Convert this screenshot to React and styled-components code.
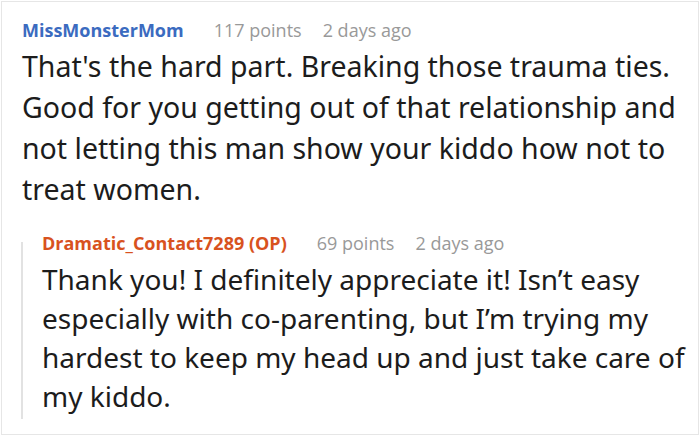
import React from "react";
import styled, { createGlobalStyle } from "styled-components";

const Global = createGlobalStyle`
  html, body { margin: 0; padding: 0; background: #fff; }
  body { font-family: "Open Sans", "Noto Sans", sans-serif; }
`;

const Frame = styled.div`
  box-sizing: border-box;
  width: 698px;
  height: 434px;
  margin: 1px 0 0 1px;
  border: 1px solid #e6e6e6;
  padding: 14px 4px 0 20px;
  overflow: hidden;
`;

const Comment = styled.div`
  display: flex;
  flex-direction: column;
`;

const Meta = styled.div`
  display: flex;
  align-items: baseline;
  font-family: "Open Sans", sans-serif;
  font-size: 18px;
  line-height: 28px;
  white-space: nowrap;
`;

const Author = styled.span`
  font-weight: 700;
  color: ${(p) => p.$color};
  margin-right: 30px;
`;

const Stat = styled.span`
  color: #999;
  margin-right: 21px;
`;

const Body = styled.p`
  margin: ${(p) => p.$top}px 0 0;
  font-family: "Noto Sans", "Open Sans", sans-serif;
  font-size: ${(p) => p.$size}px;
  line-height: ${(p) => p.$lh}px;
  color: #1c1c1c;
`;

const Reply = styled.div`
  position: relative;
  margin: 19px 0 0 -1px;
  padding-left: 21px;
  display: flex;
  flex-direction: column;

  &::before {
    content: "";
    position: absolute;
    left: 0;
    top: 13px;
    bottom: -3px;
    width: 2px;
    background: #e2e2e2;
  }
`;

export default function App() {
  return (
    <>
      <Global />
      <Frame>
        <Comment>
          <Meta>
            <Author $color="#3b6bc0">MissMonsterMom</Author>
            <Stat>117 points</Stat>
            <Stat>2 days ago</Stat>
          </Meta>
          <Body $top={2} $size={28.5} $lh={41}>
            That's the hard part. Breaking those trauma ties. Good for you getting out of that relationship and not letting this man show your kiddo how not to treat women.
          </Body>
        </Comment>
        <Reply>
          <Meta>
            <Author $color="#d8521e">Dramatic_Contact7289 (OP)</Author>
            <Stat>69 points</Stat>
            <Stat>2 days ago</Stat>
          </Meta>
          <Body $top={3} $size={28} $lh={39}>
            Thank you! I definitely appreciate it! Isn’t easy especially with co-parenting, but I’m trying my hardest to keep my head up and just take care of my kiddo.
          </Body>
        </Reply>
      </Frame>
    </>
  );
}
